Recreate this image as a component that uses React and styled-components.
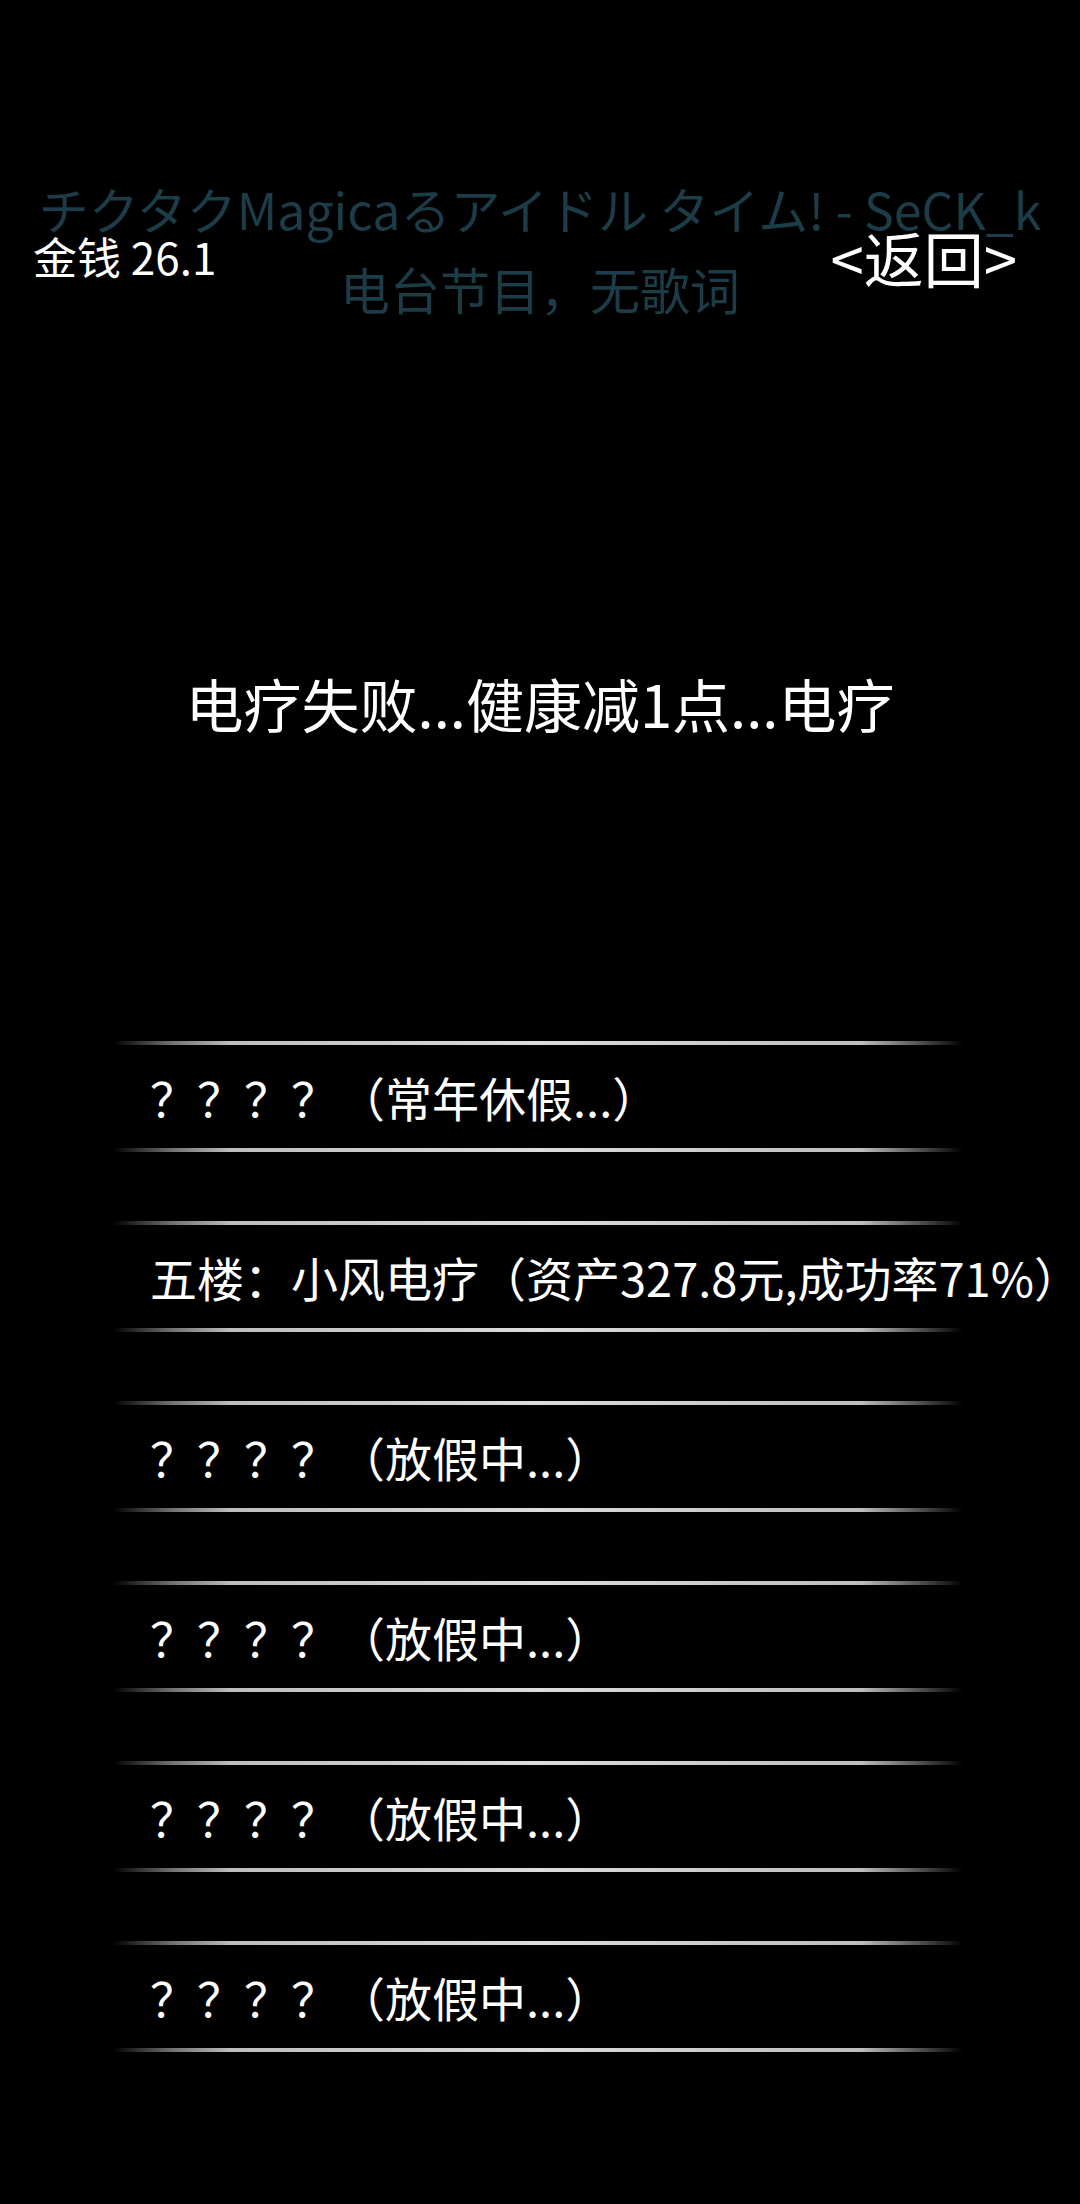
import React from "react";
import styled, { createGlobalStyle } from "styled-components";

const GlobalStyle = createGlobalStyle`
  html, body {
    margin: 0;
    padding: 0;
    background: #000;
  }
  body {
    font-family: "Noto Sans CJK SC", "Noto Sans", sans-serif;
    color: #fff;
  }
`;

const Page = styled.div`
  width: 1080px;
  min-height: 2204px;
  background: #000;
  overflow: hidden;
`;

const Header = styled.header`
  display: grid;
  padding-top: 168px;
  & > * {
    grid-area: 1 / 1;
  }
`;

const NowPlaying = styled.div`
  text-align: center;
  color: #1c3c48;
  font-size: 50px;
  line-height: 80px;
  white-space: nowrap;
`;

const TopBar = styled.div`
  display: flex;
  justify-content: space-between;
  align-items: center;
  align-self: start;
  margin-top: 58px;
  padding: 0 63px 0 33px;
  height: 60px;
`;

const Money = styled.span`
  font-size: 44px;
  color: #fff;
`;

const BackButton = styled.span`
  font-size: 60px;
  color: #fff;
  cursor: pointer;
`;

const Message = styled.div`
  margin-top: 335px;
  text-align: center;
  font-size: 58px;
  line-height: 80px;
  white-space: nowrap;
`;

const Options = styled.ul`
  list-style: none;
  margin: 298px 0 0 113px;
  padding: 0;
  width: 850px;
`;

const Option = styled.li`
  margin-bottom: 69px;
  cursor: pointer;
`;

const GlowLine = styled.div`
  height: 4px;
  background: linear-gradient(
    to right,
    rgba(255, 255, 255, 0) 0%,
    rgba(190, 190, 190, 0.6) 7%,
    rgba(210, 210, 210, 0.9) 14%,
    #dcdcdc 50%,
    rgba(210, 210, 210, 0.9) 88%,
    rgba(190, 190, 190, 0.5) 94%,
    rgba(255, 255, 255, 0) 100%
  );
  filter: blur(0.7px);
`;

const OptionText = styled.div`
  height: 103px;
  display: flex;
  align-items: center;
  padding-left: 37px;
  font-size: 47px;
  white-space: nowrap;
  color: #fff;
`;

const options = [
  "？？？？（常年休假...）",
  "五楼：小风电疗（资产327.8元,成功率71%）",
  "？？？？（放假中...）",
  "？？？？（放假中...）",
  "？？？？（放假中...）",
  "？？？？（放假中...）",
];

export default function App() {
  return (
    <Page>
      <GlobalStyle />
      <Header>
        <NowPlaying>
          <div>チクタクMagicaるアイドル タイム! - SeCK_k</div>
          <div>电台节目，无歌词</div>
        </NowPlaying>
        <TopBar>
          <Money>金钱 26.1</Money>
          <BackButton>&lt;返回&gt;</BackButton>
        </TopBar>
      </Header>
      <Message>电疗失败...健康减1点...电疗</Message>
      <Options>
        {options.map((text, i) => (
          <Option key={i}>
            <GlowLine />
            <OptionText>{text}</OptionText>
            <GlowLine />
          </Option>
        ))}
      </Options>
    </Page>
  );
}
